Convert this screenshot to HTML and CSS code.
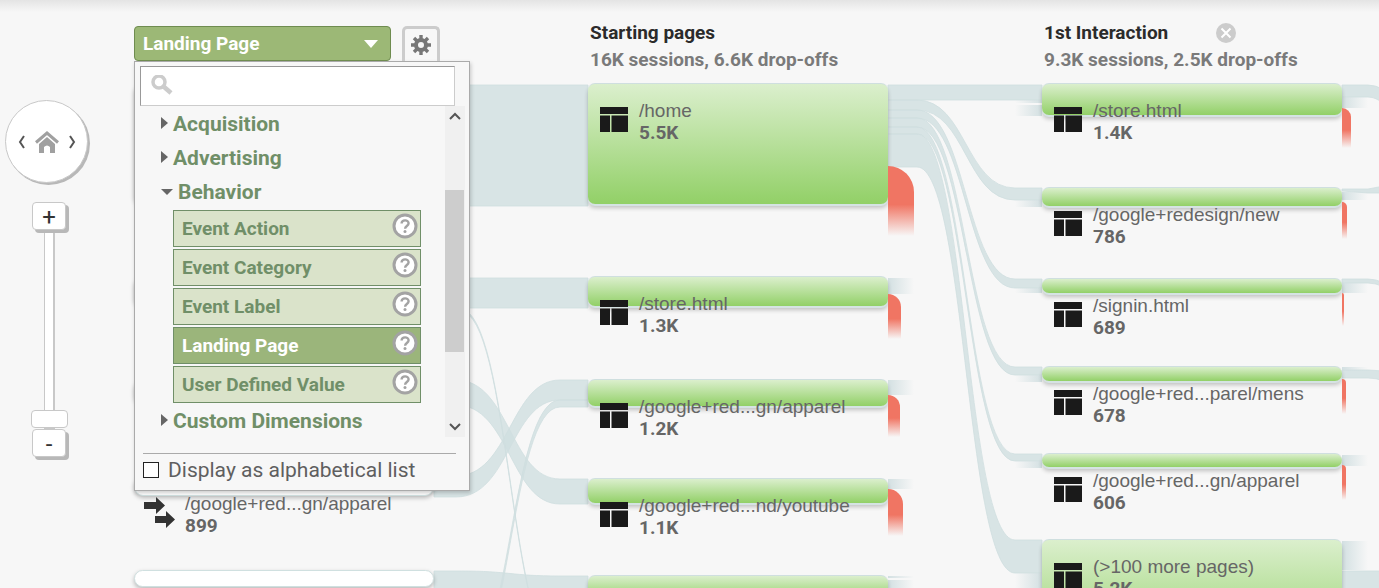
FILE: index.html
```html
<!DOCTYPE html>
<html lang="en">
  <head>
    <meta charset="UTF-8" />
    <meta name="viewport" content="width=device-width, initial-scale=1.0" />
    <title>Behavior Flow</title>
    <link rel="stylesheet" href="styles.css">
  </head>
  <body>
    <svg class="sprite" aria-hidden="true">
      <symbol id="icon-page" viewBox="0 0 28 25">
        <path fill="#1a1a1a" d="M0 0h28v7H0zM0 8.500h10V25H0zM11.500 8.500H28V25H11.500z" />
      </symbol>
      <symbol id="icon-help" viewBox="0 0 26 26">
        <circle cx="13" cy="13" r="11" fill="#fff" stroke="#a3a3a3" stroke-width="3" />
        <path fill="none" stroke="#a3a3a3" stroke-width="2.4" d="M9.600 10.600c0-4.400 7-4.200 7-.3 0 2.700-3.500 2.700-3.500 5.400" />
        <circle cx="13" cy="18.600" r="1.500" fill="#a3a3a3" />
      </symbol>
    </svg>

    <main class="flow">
      <svg class="links" width="1379" height="588" aria-hidden="true">
        <defs>
          <linearGradient id="fade-out">
            <stop offset="0" stop-color="#d3e0e2" />
            <stop offset="1" stop-color="#d3e0e2" stop-opacity="0" />
          </linearGradient>
          <linearGradient id="fade-in">
            <stop offset="0" stop-color="#d3e0e2" stop-opacity="0" />
            <stop offset="1" stop-color="#d3e0e2" />
          </linearGradient>
        </defs>
        <!-- sources to starting pages -->
        <g class="link">
          <path d="M434 85H588V206H434Z" />
          <path d="M434 278H588V308H434Z" />
          <path d="M434 380H456C510 380 510 479 560 479H588V504H560C510 504 510 405 456 405H434Z" />
          <path d="M434 476H456C510 476 510 380 560 380H588V400H560C510 400 510 497 456 497H434Z" />
          <path d="M460 674C510 674 510 400 560 400H588V407H560C510 407 510 681 460 681Z" />
          <path d="M460 309C510 309 510 650 560 650V652C510 652 510 311 460 311Z" />
          <path d="M434 571H460C510 571 510 576 560 576H588V606H434Z" />
        </g>
        <!-- starting pages to 1st interaction -->
        <g class="link">
          <path d="M888 85H1042V100H888Z" />
          <path d="M888 100H917C966 100 966 188 1015 188H1042V200H1015C966 200 966 110 917 110H888Z" />
          <path d="M888 110H917C966 110 966 279 1015 279H1042V288H1015C966 288 966 118 917 118H888Z" />
          <path d="M888 118H917C966 118 966 367 1015 367H1042V375H1015C966 375 966 127 917 127H888Z" />
          <path d="M888 127H917C966 127 966 454 1015 454H1042V461H1015C966 461 966 134 917 134H888Z" />
          <path d="M888 134H917C966 134 966 540 1015 540H1042V573H1015C966 573 966 167 917 167H888Z" />
        </g>
        <!-- leaving 1st interaction -->
        <g class="link">
          <path d="M1342 85H1368Q1376 85 1384 90V104Q1376 97 1368 97H1342Z" />
          <path d="M1342 189H1368L1384 186V193H1368L1342 191Z" />
          <path d="M1342 279H1368Q1376 279 1384 283V287Q1376 283 1368 283H1342Z" />
          <path d="M1342 370H1368L1384 371V381Q1376 378 1368 378H1342Z" />
          <path d="M1342 571H1384V590H1342Z" />
        </g>
        <g fill="url(#fade-out)">
          <rect x="888" y="278" width="26" height="16" />
          <rect x="888" y="380" width="26" height="15" />
          <rect x="888" y="479" width="26" height="10" />
          <rect x="888" y="576" width="26" height="2" />
          <rect x="888" y="580" width="26" height="10" />
          <rect x="1342" y="97" width="26" height="11" />
          <rect x="1342" y="192" width="26" height="8" />
          <rect x="1342" y="283" width="26" height="10" />
          <rect x="1342" y="367" width="26" height="4" />
          <rect x="1342" y="455" width="26" height="11" />
          <rect x="1342" y="541" width="26" height="29" />
        </g>
        <g fill="url(#fade-in)">
          <rect x="1015" y="100" width="27" height="3" />
          <rect x="1015" y="105" width="27" height="11" />
          <rect x="1015" y="200" width="27" height="7" />
          <rect x="1015" y="288" width="27" height="5" />
          <rect x="1015" y="375" width="27" height="7" />
          <rect x="1015" y="461" width="27" height="7" />
          <rect x="1015" y="573" width="27" height="17" />
        </g>
      </svg>

      <section class="column column--source">
        <div class="node" style="--y: 83px; --bar: 122px"><span class="node__bar"></span></div>
        <div class="node" style="--y: 276px; --bar: 31px"><span class="node__bar"></span></div>
        <div class="node" style="--y: 379px; --bar: 25px"><span class="node__bar"></span></div>
        <div class="node" style="--y: 476px; --bar: 20px">
          <span class="node__bar"></span>
          <svg class="node__icon node__icon--source" viewBox="0 0 32 32" aria-hidden="true">
            <path fill="#333" d="M0 6h12V1l9 8.500-9 8.500v-5H0zM11 20h11v-5l9 8.500-9 8.500v-5H11z" />
          </svg>
          <div class="node__text"><span>/google+red...gn/apparel</span><b>899</b></div>
        </div>
        <div class="node" style="--y: 570px; --bar: 17px"><span class="node__bar"></span></div>
      </section>

      <section class="column column--start">
        <header class="column__head">
          <h2 class="column__title">Starting pages</h2>
          <p class="column__stats">16K sessions, 6.6K drop-offs</p>
        </header>
        <div class="node" style="--y: 83px; --bar: 121px; --drop-y: 83px; --drop-w: 26px; --drop-h: 70px">
          <span class="node__bar"></span><span class="node__drop"></span>
          <svg class="node__icon" aria-hidden="true"><use href="#icon-page" /></svg>
          <div class="node__text"><span>/home</span><b>5.5K</b></div>
        </div>
        <div class="node" style="--y: 276px; --bar: 30px; --drop-y: 18px; --drop-w: 13px; --drop-h: 45px">
          <span class="node__bar"></span><span class="node__drop"></span>
          <svg class="node__icon" aria-hidden="true"><use href="#icon-page" /></svg>
          <div class="node__text"><span>/store.html</span><b>1.3K</b></div>
        </div>
        <div class="node" style="--y: 379px; --bar: 27px; --drop-y: 16px; --drop-w: 12px; --drop-h: 42px">
          <span class="node__bar"></span><span class="node__drop"></span>
          <svg class="node__icon" aria-hidden="true"><use href="#icon-page" /></svg>
          <div class="node__text"><span>/google+red...gn/apparel</span><b>1.2K</b></div>
        </div>
        <div class="node" style="--y: 478px; --bar: 25px; --drop-y: 11px; --drop-w: 15px; --drop-h: 47px">
          <span class="node__bar"></span><span class="node__drop"></span>
          <svg class="node__icon" aria-hidden="true"><use href="#icon-page" /></svg>
          <div class="node__text"><span>/google+red...nd/youtube</span><b>1.1K</b></div>
        </div>
        <div class="node" style="--y: 575px; --bar: 24px"><span class="node__bar"></span></div>
      </section>

      <section class="column column--first">
        <header class="column__head">
          <div class="column__row">
            <h2 class="column__title">1st Interaction</h2>
            <button class="column__close" aria-label="Remove step">
              <svg viewBox="0 0 20 20" width="20" height="20"><circle cx="10" cy="10" r="10" fill="#ccc" /><path stroke="#fff" stroke-width="2" d="M5.500 5.500l9 9M14.500 5.500l-9 9" /></svg>
            </button>
          </div>
          <p class="column__stats">9.3K sessions, 2.5K drop-offs</p>
        </header>
        <div class="node" style="--y: 83px; --bar: 32px; --drop-y: 25px; --drop-w: 9px; --drop-h: 40px">
          <span class="node__bar"></span><span class="node__drop"></span>
          <svg class="node__icon" aria-hidden="true"><use href="#icon-page" /></svg>
          <div class="node__text"><span>/store.html</span><b>1.4K</b></div>
        </div>
        <div class="node" style="--y: 187px; --bar: 19px; --drop-y: 15px; --drop-w: 5px; --drop-h: 37px">
          <span class="node__bar"></span><span class="node__drop"></span>
          <svg class="node__icon" aria-hidden="true"><use href="#icon-page" /></svg>
          <div class="node__text"><span>/google+redesign/new</span><b>786</b></div>
        </div>
        <div class="node" style="--y: 278px; --bar: 15px; --drop-y: 15px; --drop-w: 2px; --drop-h: 33px">
          <span class="node__bar"></span><span class="node__drop"></span>
          <svg class="node__icon" aria-hidden="true"><use href="#icon-page" /></svg>
          <div class="node__text"><span>/signin.html</span><b>689</b></div>
        </div>
        <div class="node" style="--y: 366px; --bar: 15px; --drop-y: 13px; --drop-w: 4px; --drop-h: 35px">
          <span class="node__bar"></span><span class="node__drop"></span>
          <svg class="node__icon" aria-hidden="true"><use href="#icon-page" /></svg>
          <div class="node__text"><span>/google+red...parel/mens</span><b>678</b></div>
        </div>
        <div class="node" style="--y: 453px; --bar: 14px; --drop-y: 12px; --drop-w: 4px; --drop-h: 35px">
          <span class="node__bar"></span><span class="node__drop"></span>
          <svg class="node__icon" aria-hidden="true"><use href="#icon-page" /></svg>
          <div class="node__text"><span>/google+red...gn/apparel</span><b>606</b></div>
        </div>
        <div class="node" style="--y: 539px; --bar: 116px">
          <span class="node__bar"></span>
          <svg class="node__icon" aria-hidden="true"><use href="#icon-page" /></svg>
          <div class="node__text"><span>(&gt;100 more pages)</span><b>5.2K</b></div>
        </div>
      </section>

      <nav class="navigator" aria-label="Pan and zoom">
        <div class="pan">
          <button class="pan__btn" aria-label="Pan left"><svg viewBox="0 0 8 14" width="8" height="14"><path class="stroke" d="M6 1L2 7l4 6" /></svg></button>
          <button class="pan__btn" aria-label="Home">
            <svg viewBox="0 0 24 22" width="24" height="22"><path fill="none" stroke="#a0a0a0" stroke-width="3" d="M1 11.500L12 2l11 9.500" /><path fill="#a0a0a0" d="M4 13l8-7 8 7v9h-5v-6q-3-3-6 0v6H4z" /></svg>
          </button>
          <button class="pan__btn" aria-label="Pan right"><svg viewBox="0 0 8 14" width="8" height="14"><path class="stroke" d="M2 1l4 6-4 6" /></svg></button>
        </div>
        <button class="zoom-btn" aria-label="Zoom in">+</button>
        <input class="zoom" type="range" min="0" max="10" value="0" aria-label="Zoom level">
        <button class="zoom-btn" aria-label="Zoom out">-</button>
      </nav>

      <div class="picker">
        <div class="picker__bar">
          <button class="picker__button" aria-haspopup="true" aria-expanded="true">Landing Page</button>
          <button class="picker__gear" aria-label="Settings">
            <svg viewBox="0 0 20 20" width="20" height="20">
              <g stroke="#777" stroke-width="3.400"><path d="M10 0v20M0 10h20M3 3l14 14M17 3L3 17" /></g>
              <circle cx="10" cy="10" r="5" fill="#f7f7f7" stroke="#777" stroke-width="4" />
            </svg>
          </button>
        </div>
        <div class="menu">
          <label class="search">
            <svg viewBox="0 0 22 20" width="22" height="20"><circle cx="8" cy="7" r="6" fill="none" stroke="#ccc" stroke-width="3.500" /><path stroke="#ccc" stroke-width="4.500" d="M12 11l8 7" /></svg>
            <input class="search__input" type="text" aria-label="Search dimensions">
          </label>
          <div class="menu__scroll">
            <div class="tree">
              <button class="tree__group">Acquisition</button>
              <button class="tree__group">Advertising</button>
              <button class="tree__group tree__group--open">Behavior</button>
              <ul class="tree__items">
                <li class="item"><button class="item__name">Event Action</button><svg class="item__help"><use href="#icon-help" /></svg></li>
                <li class="item"><button class="item__name">Event Category</button><svg class="item__help"><use href="#icon-help" /></svg></li>
                <li class="item"><button class="item__name">Event Label</button><svg class="item__help"><use href="#icon-help" /></svg></li>
                <li class="item item--active"><button class="item__name">Landing Page</button><svg class="item__help"><use href="#icon-help" /></svg></li>
                <li class="item"><button class="item__name">User Defined Value</button><svg class="item__help"><use href="#icon-help" /></svg></li>
              </ul>
              <button class="tree__group">Custom Dimensions</button>
            </div>
            <div class="scrollbar" aria-hidden="true">
              <svg class="scrollbar__arrow" viewBox="0 0 20 20"><path class="stroke" d="M5 13l5-5 5 5" /></svg>
              <span class="scrollbar__thumb"></span>
              <svg class="scrollbar__arrow" viewBox="0 0 20 20"><path class="stroke" d="M5 7l5 5 5-5" /></svg>
            </div>
          </div>
          <label class="menu__alpha"><input class="check" type="checkbox"> Display as alphabetical list</label>
        </div>
      </div>
    </main>
  </body>
</html>
```

FILE: styles.css
```css
* {
  margin: 0;
  padding: 0;
  box-sizing: border-box;
}
body {
  background-color: #f7f7f7;
  font-family: Roboto, sans-serif;
  color: #666;
}
button {
  font: inherit;
  color: inherit;
  background: none;
  border: none;
  cursor: pointer;
}
svg {
  display: block;
}
.sprite {
  position: absolute;
  width: 0;
  height: 0;
}
.stroke {
  fill: none;
  stroke: #555;
  stroke-width: 2;
}

/* canvas */
.flow {
  position: relative;
  height: 100vh;
  overflow: hidden;
  background-image: linear-gradient(#e4e4e4, #f7f7f7 12px);
}
.links {
  position: absolute;
  top: 0;
  left: 0;
}
.link {
  fill: #cfdee0;
  fill-opacity: .8;
  stroke: #cfdfe0;
  stroke-width: 1;
  stroke-opacity: .8;
}
.column {
  position: absolute;
  top: 0;
  width: 300px;
}
.column--source {
  left: 134px;
}
.column--start {
  left: 588px;
}
.column--first {
  left: 1042px;
}
.column__head {
  padding: 19px 0 0 2px;
  font-size: 19px;
  line-height: 27px;
  white-space: nowrap;
}
.column__row {
  display: flex;
  align-items: center;
  gap: 48px;
}
.column__title {
  font-size: 19px;
  font-weight: bold;
  color: #2b2b2b;
}
.column__stats {
  font-weight: bold;
  color: #7a7a7a;
}

/* nodes */
.node {
  position: absolute;
  top: var(--y);
  left: 0;
  width: 100%;
  display: flex;
  gap: 11px;
  padding: 17px 12px 0;
}
.node__bar {
  position: absolute;
  top: 0;
  left: 0;
  width: 100%;
  height: var(--bar);
  border-radius: 7px;
  border-top: 1px solid #cfdfdf;
  background-image: linear-gradient(#dbefcd, #92d067);
  box-shadow: 0 2px 0 #d5e3e3, 0 4px 4px rgba(0, 0, 0, .22);
}
.column--source .node__bar {
  border: 1px solid #d0e0e0;
  border-radius: 9px;
  background: #fff;
  box-shadow: 0 2px 4px rgba(0, 0, 0, .25);
}
.node__drop {
  position: absolute;
  top: var(--drop-y);
  left: 100%;
  width: var(--drop-w);
  height: var(--drop-h);
  border-top-right-radius: var(--drop-w);
  background-image: linear-gradient(#f07563 55%, rgba(240, 117, 99, 0));
}
.node__icon {
  position: relative;
  width: 28px;
  height: 25px;
  margin-top: 7px;
}
.node__icon--source {
  width: 32px;
  height: 32px;
  margin: 3px -2px 0;
}
.node__text {
  position: relative;
  display: flex;
  flex-direction: column;
  font-family: "Liberation Sans", Arial, sans-serif;
  font-size: 19px;
  line-height: 22px;
  white-space: nowrap;
}
.node__text b {
  font-family: Roboto, sans-serif;
}

/* navigator */
.navigator {
  position: absolute;
  top: 100px;
  left: 5px;
  width: 88px;
  display: flex;
  flex-direction: column;
  align-items: center;
}
.pan {
  width: 83px;
  height: 83px;
  margin: 0 5px 19px 0;
  display: flex;
  align-items: center;
  justify-content: center;
  align-self: flex-start;
  gap: 9px;
  border: 1px solid #c8c8c8;
  border-radius: 50%;
  background-color: #fff;
  box-shadow: 2px 2px 0 #b8b8b8;
}
.zoom-btn {
  position: relative;
  width: 34px;
  height: 28px;
  border: 1px solid #c8c8c8;
  border-radius: 4px;
  background-color: #fff;
  box-shadow: 3px 3px 0 #b8b8b8;
  color: #333;
  font-size: 24px;
  line-height: 28px;
}
.zoom {
  appearance: none;
  writing-mode: vertical-lr;
  direction: rtl;
  width: 37px;
  height: 199px;
  background: none;
}
.zoom::-webkit-slider-runnable-track {
  width: 11px;
  height: 100%;
  border: 1px solid #c8c8c8;
  border-right: 2px solid #b8b8b8;
  border-block-color: #c8c8c8;
  background-color: #fff;
}
.zoom::-webkit-slider-thumb {
  appearance: none;
  width: 37px;
  height: 18px;
  margin-left: -14px;
  border: 1px solid #c8c8c8;
  border-radius: 4px;
  background-color: #fff;
}

/* dimension picker */
.picker {
  position: absolute;
  top: 26px;
  left: 134px;
  width: 336px;
}
.picker__bar {
  display: flex;
  gap: 11px;
}
.picker__button {
  width: 257px;
  height: 35px;
  padding: 0 12px 0 8px;
  display: flex;
  align-items: center;
  justify-content: space-between;
  border: 1px solid #6f8c50;
  border-radius: 4px;
  background-color: #9cb876;
  color: #fff;
  font-size: 19px;
  font-weight: bold;
}
.picker__button::after {
  content: "";
  border: 7px solid transparent;
  border-top: 8px solid #fff;
  border-bottom: none;
}
.picker__gear {
  width: 38px;
  height: 35px;
  display: flex;
  align-items: center;
  justify-content: center;
  border: 3px solid #ccc;
  border-bottom: none;
  border-radius: 5px 5px 0 0;
}
.menu {
  padding: 4px 4px 8px 5px;
  border: 1px solid #aaa;
  background-color: #f7f7f7;
  box-shadow: 1px 2px 4px rgba(0, 0, 0, .2);
}
.search {
  width: 315px;
  height: 40px;
  display: flex;
  align-items: flex-start;
  gap: 6px;
  padding: 8px 10px;
  border: 1px solid #ccc;
  border-top-color: #999;
  border-left-color: #999;
  background-color: #fff;
}
.search__input {
  flex: 1;
  min-width: 0;
  height: 22px;
  border: none;
  outline: none;
  font-size: 19px;
}
.menu__scroll {
  display: flex;
  justify-content: space-between;
  height: 331px;
}
.tree {
  width: 281px;
  padding-top: 1px;
}
.tree__group {
  display: flex;
  align-items: center;
  gap: 5px;
  height: 34px;
  padding-left: 21px;
  color: #708f68;
  font-size: 21px;
  font-weight: bold;
}
.tree__group::before {
  content: "";
  margin-bottom: 3px;
  border: 6px solid transparent;
  border-left: 7px solid #666;
  border-right: none;
}
.tree__group--open::before {
  margin-bottom: 0;
  border: 6px solid transparent;
  border-top: 6px solid #666;
  border-bottom: none;
}
.tree__items {
  list-style: none;
  display: grid;
  gap: 2px;
  padding: 1px 0 1px 33px;
}
.item {
  display: flex;
  justify-content: space-between;
  height: 37px;
  padding-right: 2px;
  border: 1px solid #708f68;
  background-color: #dae3ca;
  color: #708f68;
}
.item--active {
  background-color: #9bb57b;
  color: #fff;
}
.item__name {
  flex: 1;
  padding-left: 8px;
  text-align: left;
  font-size: 19px;
  font-weight: bold;
}
.item__help {
  width: 26px;
  height: 26px;
  margin-top: 2px;
}
.scrollbar {
  width: 20px;
  display: flex;
  flex-direction: column;
  background-color: #f0f0f0;
}
.scrollbar__arrow {
  width: 20px;
  height: 20px;
}
.scrollbar__arrow:last-child {
  margin-top: auto;
}
.scrollbar__thumb {
  width: 19px;
  height: 162px;
  margin-top: 64px;
  background-color: #cdcdcd;
}
.menu__alpha {
  display: flex;
  align-items: center;
  gap: 9px;
  width: 313px;
  margin: 16px 0 0 3px;
  padding-top: 4px;
  border-top: 1px solid #aaa;
  font-size: 21px;
  color: #5f5f5f;
  white-space: nowrap;
}
.check {
  appearance: none;
  width: 16px;
  height: 16px;
  border: 1px solid #222;
  background-color: #fff;
}
```
